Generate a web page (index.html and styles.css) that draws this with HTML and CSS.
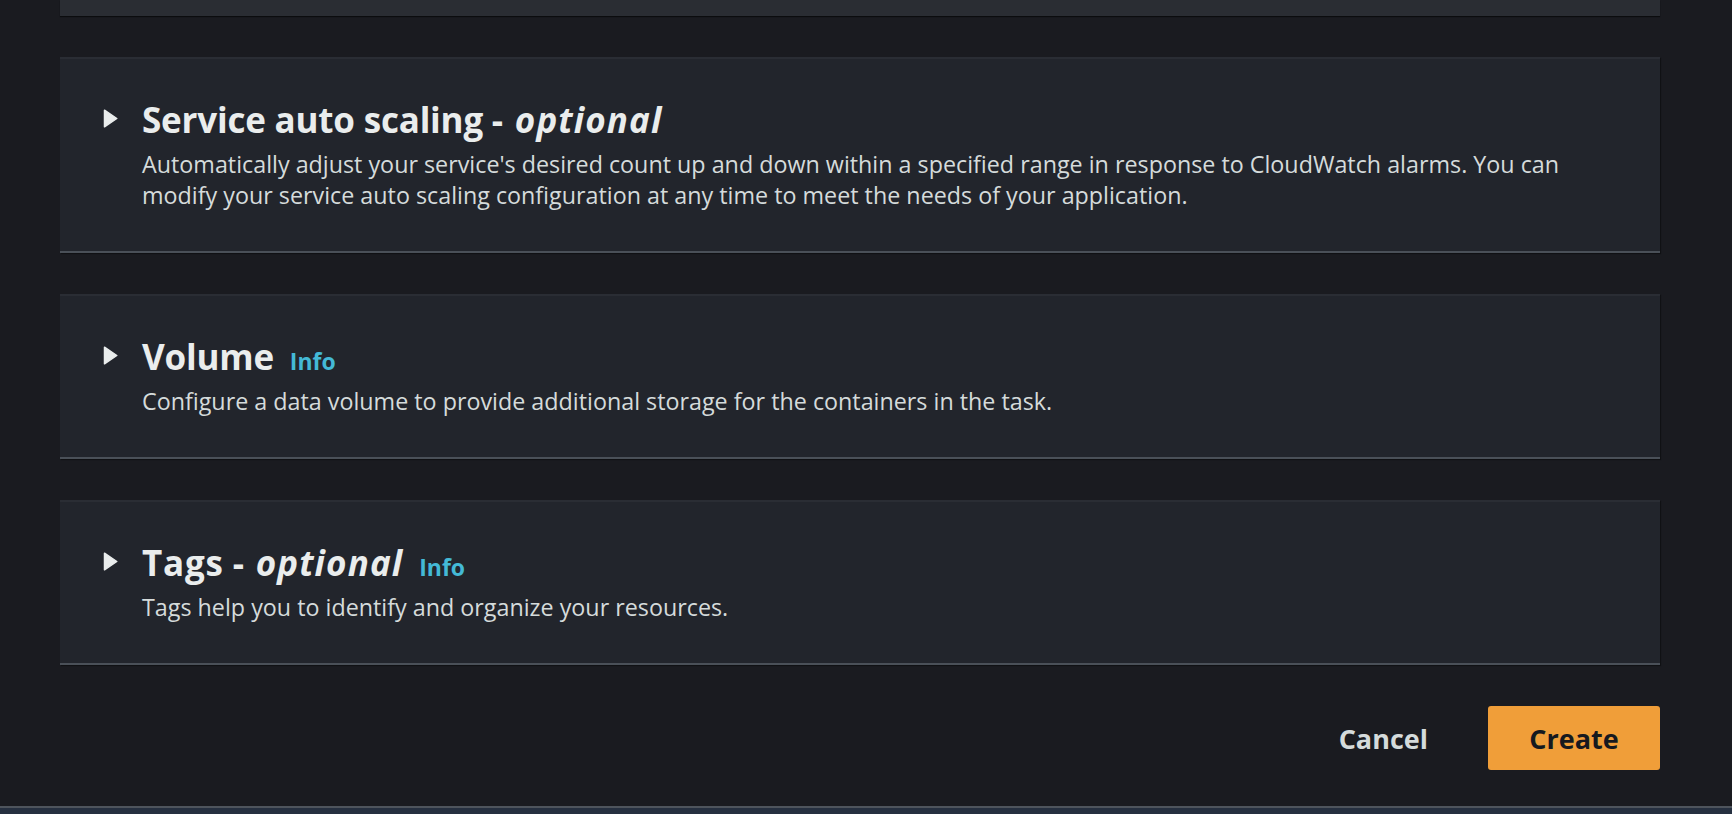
FILE: index.html
```html
<!DOCTYPE html>
<html lang="en">
<head>
<meta charset="utf-8">
<title>Create service</title>
<link rel="stylesheet" href="styles.css">
</head>
<body>
<div class="main">
  <div class="top-panel"></div>

  <section class="panel">
    <svg class="caret" viewBox="0 0 15 19" aria-hidden="true"><path d="M1.5 1.2 L13.8 9.5 L1.5 17.8 Z" fill="#eaeded" stroke="#eaeded" stroke-width="1.5" stroke-linejoin="round"/></svg>
    <h2 class="title">Service auto scaling - <i class="opt">optional</i></h2>
    <p class="desc">Automatically adjust your service's desired count up and down within a specified range in response to CloudWatch alarms. You can modify your service auto scaling configuration at any time to meet the needs of your application.</p>
  </section>

  <section class="panel">
    <svg class="caret" viewBox="0 0 15 19" aria-hidden="true"><path d="M1.5 1.2 L13.8 9.5 L1.5 17.8 Z" fill="#eaeded" stroke="#eaeded" stroke-width="1.5" stroke-linejoin="round"/></svg>
    <h2 class="title">Volume <a class="info" href="#">Info</a></h2>
    <p class="desc">Configure a data volume to provide additional storage for the containers in the task.</p>
  </section>

  <section class="panel">
    <svg class="caret" viewBox="0 0 15 19" aria-hidden="true"><path d="M1.5 1.2 L13.8 9.5 L1.5 17.8 Z" fill="#eaeded" stroke="#eaeded" stroke-width="1.5" stroke-linejoin="round"/></svg>
    <h2 class="title"><span class="tags-word">Tags</span> - <i class="opt">optional</i> <a class="info" href="#">Info</a></h2>
    <p class="desc">Tags help you to identify and organize your resources.</p>
  </section>

  <div class="actions">
    <button class="btn btn-link" type="button">Cancel</button>
    <button class="btn btn-primary" type="button">Create</button>
  </div>
</div>
<div class="footer"></div>
</body>
</html>
```

FILE: styles.css
```css
* { box-sizing: border-box; }

html, body {
  margin: 0;
  padding: 0;
}

body {
  width: 1732px;
  height: 814px;
  overflow: hidden;
  background: #1a1b20;
  font-family: "Open Sans", "Noto Sans", sans-serif;
  color: #eaeded;
  display: flex;
  flex-direction: column;
}

.main {
  flex: 1;
  display: flex;
  flex-direction: column;
  gap: 41px;
  padding: 0 72px 0 60px;
}

.top-panel {
  height: 16px;
  background: #2a2d33;
  box-shadow: 0 1px 1px rgba(0, 0, 0, 0.55);
}

.panel {
  background: #22252c;
  border-top: 2px solid #2a2d34;
  border-bottom: 2px solid #4a5058;
  box-shadow: 1px 1px 1px rgba(0, 0, 0, 0.35);
  padding: 39px 40px 40px 43px;
  display: grid;
  grid-template-columns: 15px 1fr;
  column-gap: 24px;
  row-gap: 7px;
}

.caret {
  grid-column: 1;
  grid-row: 1;
  width: 15px;
  height: 19px;
  margin-top: 11px;
}

.title {
  grid-column: 2;
  grid-row: 1;
  margin: 0;
  font-size: 35px;
  line-height: 44px;
  font-weight: 700;
  color: #eaeded;
  letter-spacing: -0.2px;
}

.tags-word {
  letter-spacing: 0.8px;
}

.opt {
  font-style: italic;
  font-weight: 700;
  letter-spacing: 1.1px;
  margin-left: 3px;
}

.info {
  margin-left: 7px;
  font-size: 23px;
  line-height: 1;
  font-weight: 700;
  font-style: normal;
  color: #44b9d6;
  text-decoration: none;
  letter-spacing: 0;
}

.desc {
  grid-column: 2;
  grid-row: 2;
  margin: 0;
  font-size: 23.3px;
  line-height: 31px;
  color: #d5dbdb;
}

.actions {
  display: flex;
  justify-content: flex-end;
  align-items: center;
  gap: 30px;
}

.btn {
  height: 64px;
  border: none;
  border-radius: 3px;
  font-family: "Open Sans", "Noto Sans", sans-serif;
  font-size: 27px;
  font-weight: 700;
  cursor: pointer;
}

.btn-link {
  background: transparent;
  color: #d5dbdb;
  padding: 0 30px;
}

.btn-primary {
  width: 172px;
  background: #f09e39;
  color: #16191f;
  padding: 0;
}

.footer {
  height: 8px;
  border-top: 2px solid #4e545c;
  background: #263040;
}
```
